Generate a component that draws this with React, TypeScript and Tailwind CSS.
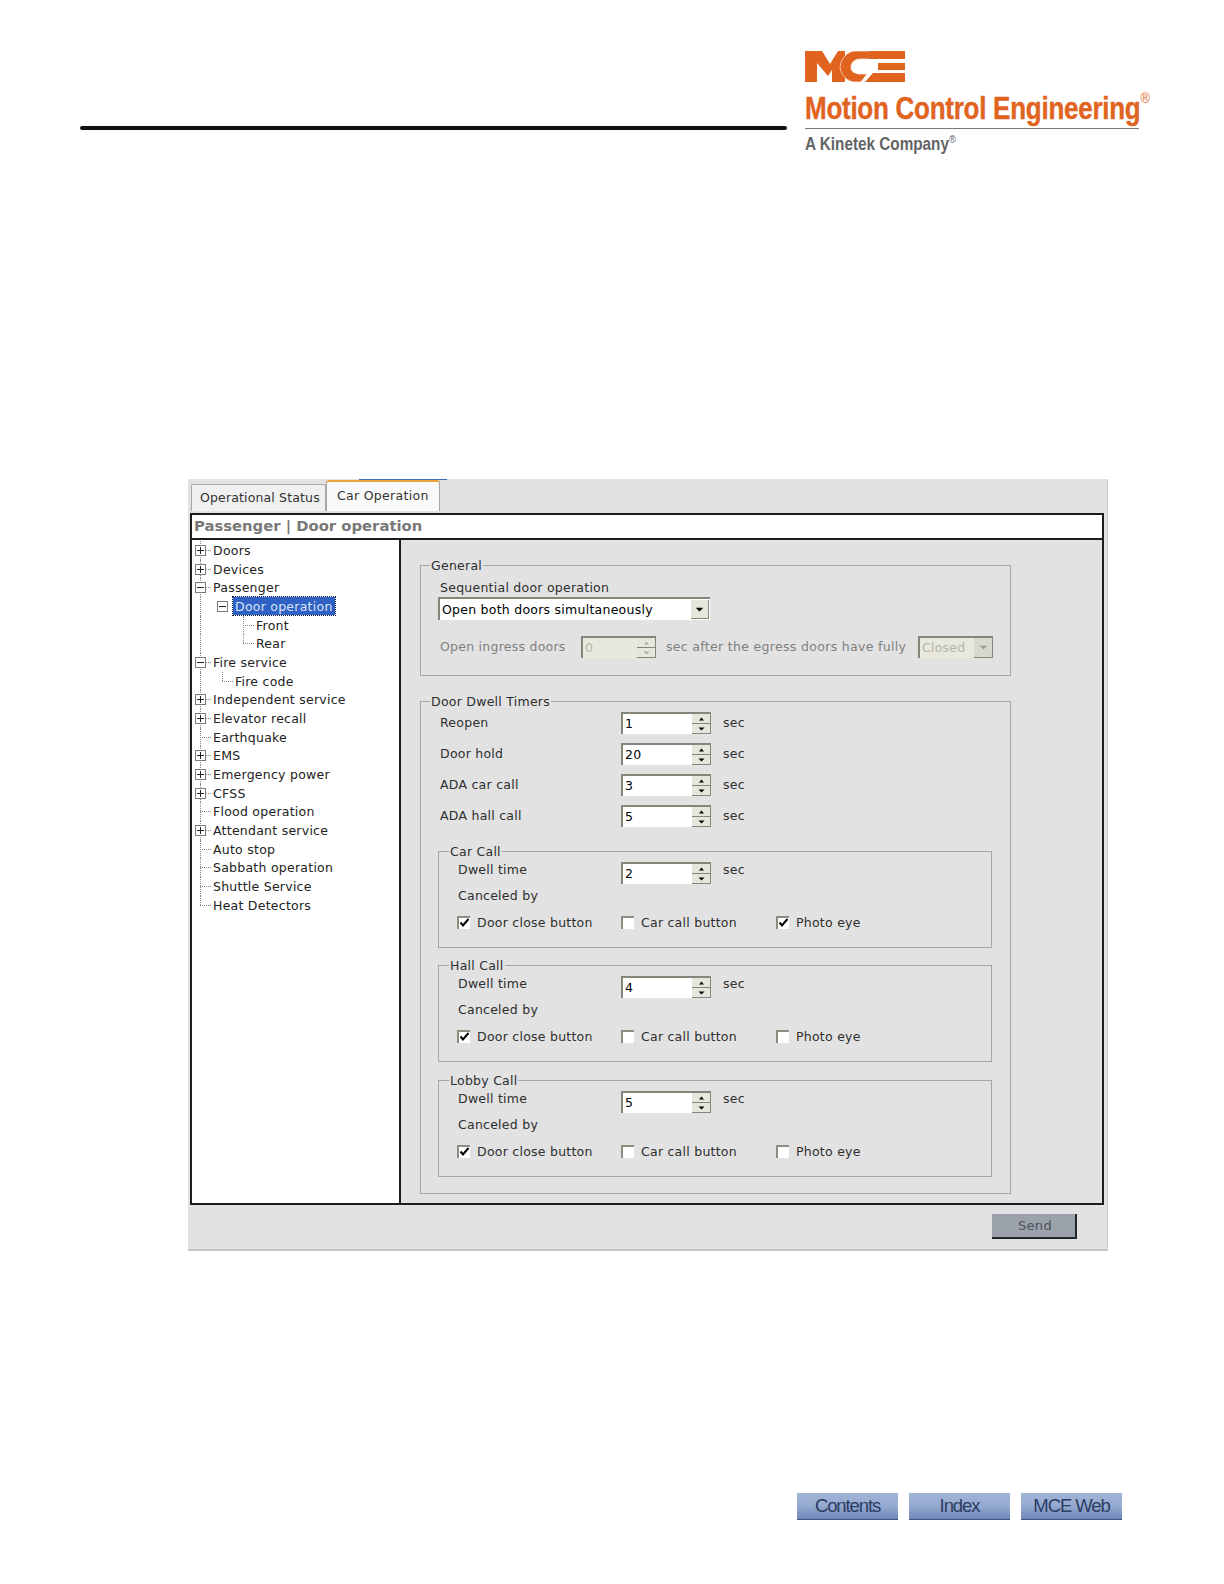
const font = "font-['DejaVu_Sans',sans-serif]"

const Arrow = ({ up, color = "#000", big }: { up?: boolean; color?: string; big?: boolean }) => (
    <svg width={big ? 9 : 7} height={big ? 5 : 4} viewBox="0 0 7 4">
        <path d={up ? "M3.5 0.5 L6 3.5 L1 3.5 Z" : "M0.5 0.5 L6.5 0.5 L3.5 3.5 Z"} fill={color} />
    </svg>
)

const Spinner = ({ value, disabled, w = "w-[90px]" }: { value: string; disabled?: boolean; w?: string }) => (
    <div className={`${w} h-[22px] flex border-t-2 border-l-2 border-[#85857a] ${disabled ? "bg-[#e8e8dc] text-[#b4b4a8]" : "bg-white text-black"}`}>
        <span className="flex-1 pl-[2px] pt-[2px] text-[12.5px] leading-[16px]">{value}</span>
        <div className="w-[19px] flex flex-col bg-[#e6e6dc] border-r border-[#85857a]">
            <span className="h-[10px] flex items-center justify-center border-b border-[#85857a]"><Arrow up color={disabled ? "#aaa" : "#000"} /></span>
            <span className="h-[10px] flex items-center justify-center border-b border-[#85857a]"><Arrow color={disabled ? "#aaa" : "#000"} /></span>
        </div>
    </div>
)

const Check = ({ checked, label, w }: { checked?: boolean; label: string; w: string }) => (
    <div className={`${w} flex items-center h-[14px]`}>
        <span className="-mt-[2px] w-[13px] h-[13px] bg-white border-t-2 border-l-2 border-[#8c8c80] flex items-center justify-center">
            {checked && (
                <svg width="11" height="10" viewBox="0 0 11 10">
                    <path d="M1.5 4.5 L4 7.5 L9.5 1" fill="none" stroke="#000" strokeWidth="2" />
                </svg>
            )}
        </span>
        <span className="ml-[7px] text-[#2e2e2e]">{label}</span>
    </div>
)

const Legend = ({ title, className }: { title: string; className: string }) => (
    <legend className={`px-[1px] h-4 leading-[18px] text-[#2e2e2e] ${className}`}>{title}</legend>
)

const CallGroup = ({ title, value, photo, className }: { title: string; value: string; photo?: boolean; className: string }) => (
    <fieldset className={`ml-[17px] w-[554px] border border-[#a6a6a6] pl-[19px] pb-[17px] ${className}`}>
        <Legend title={title} className="-ml-[9px]" />
        <div className="flex items-start pt-[3px]">
            <span className="w-[163px] mt-[1px] leading-[14px] text-[#2e2e2e]">Dwell time</span>
            <Spinner value={value} />
            <span className="ml-[12px] mt-[1px] leading-[14px] text-[#2e2e2e]">sec</span>
        </div>
        <div className="mt-[2px] h-[20px] leading-[20px] text-[#2e2e2e]">Canceled by</div>
        <div className="mt-[10px] -ml-[1px] flex">
            <Check checked label="Door close button" w="w-[164px]" />
            <Check label="Car call button" w="w-[155px]" />
            <Check checked={photo} label="Photo eye" w="w-[100px]" />
        </div>
    </fieldset>
)

const DwellRow = ({ label, value, className = "" }: { label: string; value: string; className?: string }) => (
    <div className={`flex items-center h-[22px] pl-[19px] text-[#2e2e2e] ${className}`}>
        <span className="w-[181px]">{label}</span>
        <Spinner value={value} />
        <span className="ml-[12px]">sec</span>
    </div>
)

type Node = { text: string; level: 0 | 1 | 2; box?: "+" | "-"; selected?: boolean; last?: boolean }

const tree: Node[] = [
    { text: "Doors", level: 0, box: "+" },
    { text: "Devices", level: 0, box: "+" },
    { text: "Passenger", level: 0, box: "-" },
    { text: "Door operation", level: 1, box: "-", selected: true },
    { text: "Front", level: 2 },
    { text: "Rear", level: 2, last: true },
    { text: "Fire service", level: 0, box: "-" },
    { text: "Fire code", level: 1, last: true },
    { text: "Independent service", level: 0, box: "+" },
    { text: "Elevator recall", level: 0, box: "+" },
    { text: "Earthquake", level: 0 },
    { text: "EMS", level: 0, box: "+" },
    { text: "Emergency power", level: 0, box: "+" },
    { text: "CFSS", level: 0, box: "+" },
    { text: "Flood operation", level: 0 },
    { text: "Attendant service", level: 0, box: "+" },
    { text: "Auto stop", level: 0 },
    { text: "Sabbath operation", level: 0 },
    { text: "Shuttle Service", level: 0 },
    { text: "Heat Detectors", level: 0 },
]

const TreeRow = ({ node, end }: { node: Node; end: boolean }) => {
    const textLeft = node.level === 0 ? "pl-[21px]" : node.level === 1 ? "pl-[43px]" : "pl-[64px]"
    return (
        <div className={`relative h-[18.68px] leading-[20.5px] text-[#222] ${textLeft}`}>
            {/* connector lines of the tree */}
            <span className={`absolute left-[8px] top-0 border-l border-dotted border-[#8a8a8a] ${end ? "h-[9px]" : "h-full"}`} />
            {node.level === 0 && <span className="absolute left-[8px] top-[9px] w-[11px] border-t border-dotted border-[#8a8a8a]" />}
            {node.level === 1 && !node.box && (
                <>
                    <span className="absolute left-[30px] top-0 h-[9px] border-l border-dotted border-[#8a8a8a]" />
                    <span className="absolute left-[30px] top-[9px] w-[11px] border-t border-dotted border-[#8a8a8a]" />
                </>
            )}
            {node.level === 2 && (
                <>
                    <span className={`absolute left-[51px] top-0 border-l border-dotted border-[#8a8a8a] ${node.last ? "h-[9px]" : "h-full"}`} />
                    <span className="absolute left-[51px] top-[9px] w-[11px] border-t border-dotted border-[#8a8a8a]" />
                </>
            )}
            {node.box && (
                <span className={`absolute ${node.level === 0 ? "left-[3px]" : "left-[25px]"} top-[4px] w-[11px] h-[11px] bg-white border border-[#7c7c7c] flex items-center justify-center`}>
                    <svg width="7" height="7" viewBox="0 0 7 7">
                        <path d={node.box === "+" ? "M0 3.5 H7 M3.5 0 V7" : "M0 3.5 H7"} stroke="#222" strokeWidth="1" />
                    </svg>
                </span>
            )}
            {node.selected ? (
                <span className="inline-block -ml-[2px] px-[2px] h-[18px] leading-[19px] bg-[#2f62c4] text-[#d8e4f8] outline-1 outline-dotted outline-[#0a1a40]">{node.text}</span>
            ) : (
                node.text
            )}
        </div>
    )
}

const FooterButton = ({ label }: { label: string }) => (
    <div className="w-[101px] h-[27px] flex items-center justify-center bg-gradient-to-b from-[#a3b5d6] via-[#93a9cf] to-[#6f88b6] border-b border-[#3c5486] font-['Liberation_Sans',sans-serif] text-[18.5px] tracking-[-1.1px] text-[#2c3c63]">
        {label}
    </div>
)

export default function App() {
    return (
        <div className={`w-[1224px] h-[1584px] bg-white overflow-hidden ${font}`}>
            <div className="h-[479px] flex items-start">
                <div className="ml-[80px] mt-[126px] w-[707px] h-[4px] rounded-full bg-[#111]" />
                <div className="ml-[18px] mt-[51px] font-['Liberation_Sans',sans-serif]">
                    <svg width="100" height="31" viewBox="0 0 100 31" className="block">
                        <path d="M0 0 H17 L25 13 L33 0 H40 V31 H27 V19 L23 25 L12 12 V31 H0 Z" fill="#e0641f" />
                        <path d="M50 0 H66 V8 H56 C50 8 46 11 46 16 C46 21 50 23 56 23 H62 L56 31 H50 C43 31 36 25 35 16 C36 7 43 0 50 0 Z" fill="#e0641f" stroke="#fff" strokeWidth="0.6" />
                        <path d="M64 0 H100 V31 H60 L68 22 H100 V19 H73 V12 H100 V8 H64 Z" fill="#e0641f" />
                    </svg>
                    <div className="mt-[9px] h-[37px] w-[346px] text-[#e0641f] font-bold">
                        <span className="inline-block text-[31px] leading-[36px] whitespace-nowrap origin-left scale-x-[0.838] tracking-[-0.3px] [-webkit-text-stroke:0.4px_#e0641f]">
                            Motion Control Engineering<sup className="text-[15px] font-normal align-[9px] leading-[0] [-webkit-text-stroke:0px]">®</sup>
                        </span>
                    </div>
                    <div className="h-px w-[334px] bg-[#77787b]" />
                    <div className="mt-[3px] h-[23px] text-[#636466] font-bold">
                        <span className="inline-block text-[18px] leading-[24px] whitespace-nowrap origin-left scale-x-[0.85]">
                            A Kinetek Company<sup className="text-[11px] font-normal align-[2px] leading-[0]">®</sup>
                        </span>
                    </div>
                </div>
            </div>

            <div className="relative ml-[188px] w-[920px] h-[772px] bg-[#e2e2e2] border-r border-b-2 border-[#c4c4c4]">
                <span className="absolute left-[171px] top-0 w-[88px] h-px bg-[#3a6cc0]" />
                <div className="h-[34px] flex items-end pl-[3px] pb-[2px] tracking-[0.15px] text-[12.5px]">
                    <div className="w-[135px] h-[27px] bg-[#f0f0f0] border border-b-0 border-[#a8a8a8] rounded-t-[2px] pl-[8px] leading-[26px] text-[#333]">Operational Status</div>
                    <div className="w-[114px] h-[31px] bg-[#fafafa] border-x border-[#a8a8a8] border-t-2 border-t-[#e8a33d] rounded-t-[3px] pl-[10px] leading-[27px] tracking-[0.3px] text-[#333]">Car Operation</div>
                </div>
                <div className="ml-[2px] w-[914px] border-2 border-[#1c1c1c] text-[12.5px] tracking-[0.25px]">
                    <div className="h-[23px] bg-white pl-[2px] leading-[22px] font-bold text-[14.8px] tracking-normal text-[#787878]">Passenger | Door operation</div>
                    <div className="flex h-[665px] border-t-2 border-[#1c1c1c]">
                        <div className="w-[207px] bg-white border-r-2 border-[#1c1c1c] pt-[1px] box-content">
                            {tree.map((node, i) => (
                                <TreeRow key={i} node={node} end={i === tree.length - 1} />
                            ))}
                        </div>
                        <div className="flex-1 bg-[#e2e2e2] pl-[19px] pt-[17px]">
                            <fieldset className="w-[591px] border border-[#a6a6a6] pl-[19px] pb-[17px] text-[#2e2e2e]">
                                <Legend title="General" className="-ml-[10px]" />
                                <div className="pt-[5px] h-[24px] leading-[20px]">Sequential door operation</div>
                                <div className="-ml-[2px] w-[272px] h-[23px] flex bg-white border-t-2 border-l-2 border-[#85857a]">
                                    <span className="flex-1 pl-[2px] leading-[21px] text-black">Open both doors simultaneously</span>
                                    <span className="m-px w-[18px] flex items-center justify-center bg-[#e6e6dc] border-r border-b border-[#85857a]"><Arrow big /></span>
                                </div>
                                <div className="mt-[16px] flex items-center h-[22px] text-[#808080]">
                                    <span className="w-[141px]">Open ingress doors</span>
                                    <Spinner value="0" disabled w="w-[75px]" />
                                    <span className="ml-[10px] w-[252px] tracking-[0.32px]">sec after the egress doors have fully</span>
                                    <div className="w-[75px] h-[22px] flex border-t-2 border-l-2 border-[#85857a] bg-[#e8e8dc]">
                                        <span className="flex-1 pl-[2px] leading-[20px] text-[#b4b4a8]">Closed</span>
                                        <span className="w-[19px] flex items-center justify-center bg-[#d8d8cc] border-r border-b border-[#85857a]"><Arrow big color="#999" /></span>
                                    </div>
                                </div>
                            </fieldset>

                            <fieldset className="mt-[17px] w-[591px] h-[501px] border border-[#a6a6a6]">
                                <Legend title="Door Dwell Timers" className="ml-[9px]" />
                                <DwellRow label="Reopen" value="1" className="mt-[3px]" />
                                <DwellRow label="Door hold" value="20" className="mt-[9px]" />
                                <DwellRow label="ADA car call" value="3" className="mt-[9px]" />
                                <DwellRow label="ADA hall call" value="5" className="mt-[9px]" />
                                <CallGroup title="Car Call" value="2" photo className="mt-[16px]" />
                                <CallGroup title="Hall Call" value="4" className="mt-[9px]" />
                                <CallGroup title="Lobby Call" value="5" className="mt-[10px]" />
                            </fieldset>
                        </div>
                    </div>
                </div>
                <div className="flex justify-end pr-[30px] pt-[9px] text-[13px] tracking-[0.3px]">
                    <div className="w-[85px] h-[25px] pt-[1px] pl-[3px] flex items-center justify-center bg-[#9ca2ab] border-r-2 border-b-2 border-[#23272e] text-[#4c525c]">Send</div>
                </div>
            </div>

            <div className="mt-[242px] ml-[797px] flex gap-[11px]">
                <FooterButton label="Contents" />
                <FooterButton label="Index" />
                <FooterButton label="MCE Web" />
            </div>
        </div>
    )
}
